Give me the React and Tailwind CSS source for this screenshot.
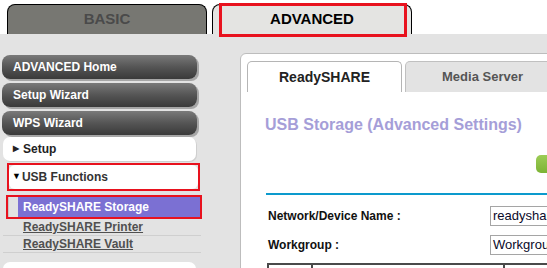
export default function App() {
  const font = { fontFamily: '"Liberation Sans", Arial, sans-serif' };
  const btn =
    "h-[24px] w-[195px] rounded-[8px] bg-gradient-to-b from-[#7a7a7a] via-[#555555] to-[#3a3a3a] shadow-[2px_2px_0_#a6a6a6] flex items-center pl-[11px] text-white font-bold text-[12px] mb-[4px]";
  return (
    <div style={font} className="relative w-[547px] h-[268px] overflow-hidden bg-[#e3e3e3]">
      {/* header */}
      <div className="h-[34px] bg-white flex items-end pl-[7px] gap-[5px]">
        <div className="w-[200px] h-[30px] bg-[#777772] border border-b-0 border-black rounded-t-[8px] flex items-center justify-center text-[15px] font-bold text-[#4a4a4a]">
          BASIC
        </div>
        <div className="w-[200px] h-[30px] bg-[#e4e4e2] border border-b-0 border-black rounded-t-[8px] flex items-center justify-center text-[15px] font-bold text-black">
          ADVANCED
        </div>
      </div>
      <div className="absolute left-[219px] top-[3px] w-[188px] h-[34px] border-[3px] border-[#e8121e]" />

      <div className="flex">
        {/* sidebar */}
        <div className="w-[240px] shrink-0 pt-[21px] pl-[2px]">
          <div className={btn}>ADVANCED Home</div>
          <div className={btn}>Setup Wizard</div>
          <div className={btn}>WPS Wizard</div>
          <div className="mt-[-2px] ml-[1px] h-[24px] w-[193px] bg-white rounded-[7px] shadow-[1px_1px_0_#cfcfcf] flex items-center pl-[10px] text-[12px] font-bold text-[#222]">
            <span className="text-[8px] mr-[4px]">▶</span>Setup
          </div>
          <div className="mt-[2px] ml-[5px] w-[193px] h-[28px] border-2 border-[#e8121e] p-0">
            <div className="h-full w-full bg-white rounded-[6px] flex items-center pl-[3px] text-[12px] font-bold text-[#333]">
              <span className="text-[9px] mr-[1px] text-black">▼</span>USB Functions
            </div>
          </div>
          <div className="mt-[4px] ml-[4px] w-[196px] h-[24px] border-2 border-[#e8121e] flex">
            <div className="w-[10px] h-full bg-[#e2e2e2] border-l border-[#c8c8c8]" />
            <div className="flex-1 h-full bg-[#7b70d3] flex items-center pl-[5px] text-white font-bold text-[12px]">
              ReadySHARE Storage
            </div>
          </div>
          <div className="w-[198px] ml-[1px] h-[17px] border-b border-[#cfcfcf] flex items-center pl-[20px] text-[12px] font-bold text-[#505050] underline">
            ReadySHARE Printer
          </div>
          <div className="w-[198px] ml-[1px] h-[17px] border-b border-[#cfcfcf] flex items-center pl-[20px] text-[12px] font-bold text-[#505050] underline">
            ReadySHARE Vault
          </div>
          <div className="mt-[9px] ml-[1px] h-[24px] w-[193px] bg-white rounded-[7px] flex items-start pt-[4px] pl-[20px] text-[12px] font-bold text-[#222]">
            Security
          </div>
        </div>

        {/* main */}
        <div className="mt-[19px] w-[420px] shrink-0 h-[260px] bg-white border border-[#bdbdbd] rounded-tl-[6px] pl-[6px] pt-[7px]">
          <div className="flex gap-[3px]">
            <div className="w-[155px] h-[31px] bg-white border border-b-0 border-[#b5b5b5] rounded-t-[5px] flex items-center justify-center text-[14px] font-bold text-[#222]">
              ReadySHARE
            </div>
            <div className="w-[155px] h-[31px] bg-[#e3e3e3] border border-b-0 border-[#c0c0c0] rounded-t-[5px] flex items-center justify-center text-[13px] font-bold text-[#555]">
              Media Server
            </div>
          </div>
          <div className="mt-[24px] ml-[18px] text-[16px] leading-[18px] font-bold text-[#a59ed8]">
            USB Storage (Advanced Settings)
          </div>
          <div className="mt-[21px] ml-[289px] w-[60px] h-[18px] rounded-[5px] bg-gradient-to-b from-[#9ccc55] to-[#7cb334]" />
          <div className="mt-[20px] ml-[19px] h-[2px] bg-[#0c9acd]" />
          <div className="mt-[11px] ml-[21px] flex items-center h-[20px]">
            <div className="w-[222px] shrink-0 text-[12px] font-bold text-[#111]">Network/Device Name :</div>
            <div className="w-[120px] shrink-0 h-[20px] border border-[#a5a5a5] flex items-center pl-[2px] text-[13px] text-[#0a0a2a]">
              readyshare
            </div>
          </div>
          <div className="mt-[9px] ml-[21px] flex items-center h-[20px]">
            <div className="w-[222px] shrink-0 text-[12px] font-bold text-[#111]">Workgroup :</div>
            <div className="w-[120px] shrink-0 h-[20px] border border-[#a5a5a5] flex items-center pl-[2px] text-[13px] text-[#0a0a2a]">
              Workgroup
            </div>
          </div>
          <div className="mt-[8px] ml-[20px] flex h-[20px] border-t-2 border-[#4a4a4a]">
            <div className="w-[44px] shrink-0 h-full border-l-2 border-[#4a4a4a]" />
            <div className="w-[192px] shrink-0 h-full border-l-2 border-[#4a4a4a]" />
            <div className="w-[60px] shrink-0 h-full border-l-2 border-[#4a4a4a]" />
          </div>
        </div>
      </div>
    </div>
  );
}
